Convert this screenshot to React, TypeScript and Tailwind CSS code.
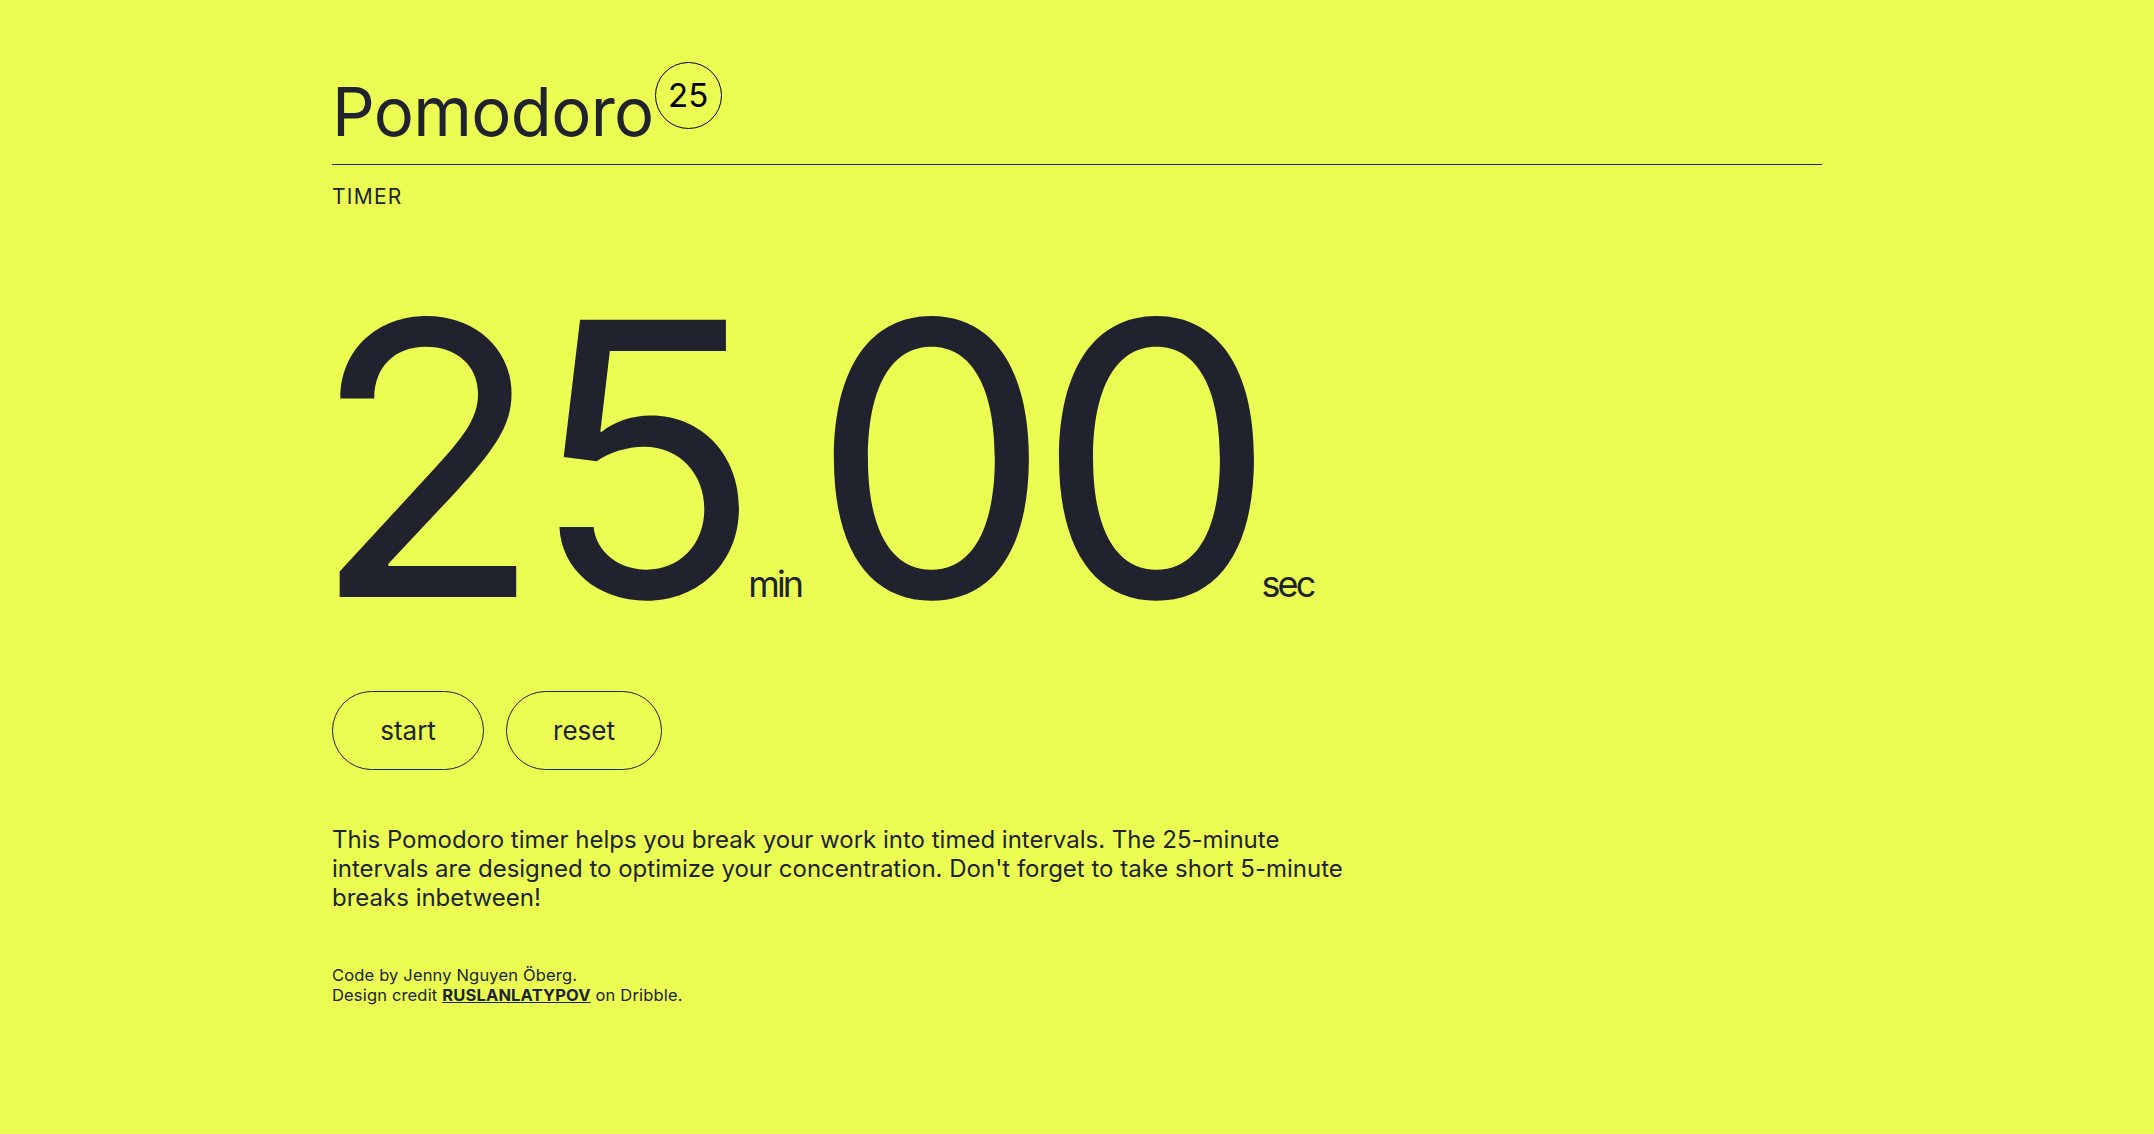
import React from "react";

const ink = "text-[#20232d]";

const App: React.FC = () => {
  return (
    <div
      className={`min-h-screen w-full bg-[#ebfd52] ${ink}`}
      style={{ fontFamily: "Inter, 'Noto Sans', sans-serif" }}
    >
      <div className="mx-auto max-w-[1490px] pt-[62px]">
        {/* header */}
        <div className="border-b border-[#20232d] pb-[19px]">
          <div className="flex items-start">
            <h1 className="mt-[16px] text-[67px] leading-none font-normal tracking-[-0.01em]">
              Pomodoro
            </h1>
            <div className="ml-[1px] flex h-[67px] w-[67px] items-center justify-center rounded-full border border-black text-[33px] leading-none text-black">
              25
            </div>
          </div>
        </div>
        <div className="mt-[21px] text-[21px] leading-none tracking-[0.06em]">
          TIMER
        </div>

        {/* clock */}
        <div className="mt-[61px] -ml-[21px] flex items-baseline">
          <span className="text-[381px] leading-none tracking-[-0.035em]">
            25
          </span>
          <span className="ml-0 text-[36px] leading-none tracking-[-0.08em]">
            min
          </span>
          <span className="ml-[10px] text-[381px] leading-none tracking-[-0.04em]">
            00
          </span>
          <span className="ml-0 text-[36px] leading-none tracking-[-0.08em]">
            sec
          </span>
        </div>

        {/* controls */}
        <div className="mt-[42px] flex gap-[22px]">
          <button className="h-[79px] w-[152px] rounded-full border border-[#20232d] text-[26px] leading-none">
            start
          </button>
          <button className="h-[79px] w-[156px] rounded-full border border-[#20232d] text-[26px] leading-none">
            reset
          </button>
        </div>

        <p className="mt-[55px] max-w-[1024px] text-[24px] leading-[29px]">
          This Pomodoro timer helps you break your work into timed intervals.
          The 25-minute intervals are designed to optimize your concentration.
          Don't forget to take short 5-minute breaks inbetween!
        </p>

        <div className="mt-[53px] text-[16.5px] leading-[20px] tracking-[0.01em]">
          <div>Code by Jenny Nguyen Öberg.</div>
          <div>
            Design credit{" "}
            <a href="#" className="font-bold underline">
              RUSLANLATYPOV
            </a>{" "}
            on Dribble.
          </div>
        </div>
      </div>
    </div>
  );
};

export default App;
